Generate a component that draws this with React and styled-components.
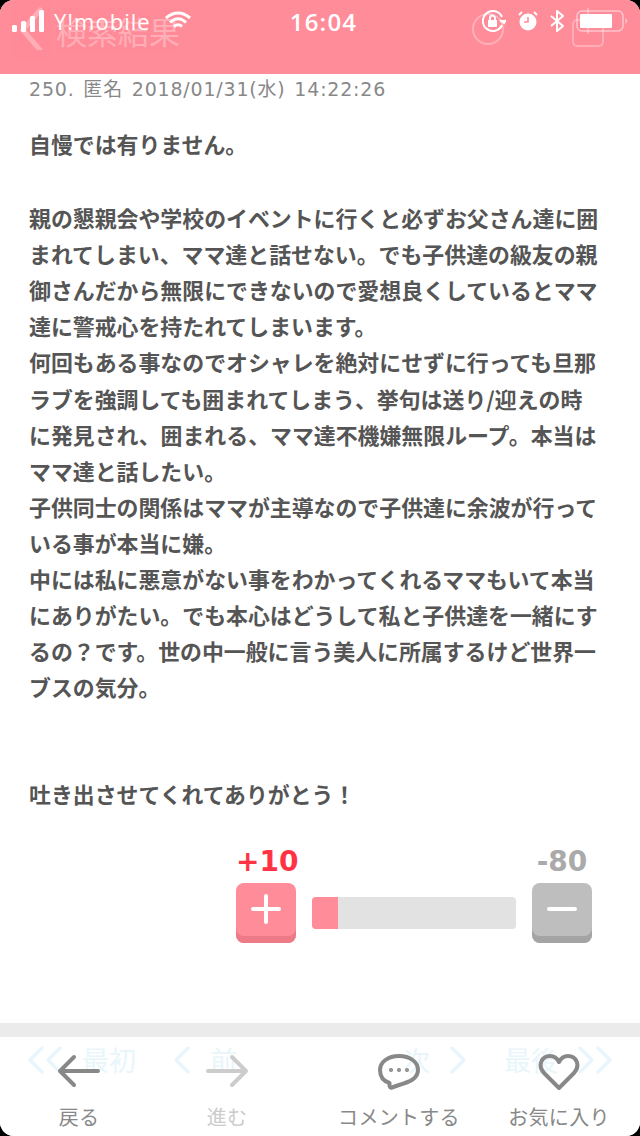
import React from 'react';
import styled, { createGlobalStyle } from 'styled-components';

const GlobalStyle = createGlobalStyle`
  html, body {
    margin: 0;
    padding: 0;
    background: #000;
  }
`;

const FONT = `"Noto Sans CJK JP", "Noto Sans", sans-serif`;

const Screen = styled.div`
  width: 640px;
  height: 1136px;
  background: #fff;
  border-radius: 14px;
  overflow: hidden;
  display: flex;
  flex-direction: column;
  font-family: ${FONT};
  position: relative;
`;

const Header = styled.header`
  height: 74px;
  flex: none;
  background: #ff8c99;
  position: relative;
  color: #fff;
`;

const StatusBar = styled.div`
  position: absolute;
  left: 12px;
  right: 10px;
  top: 9px;
  height: 24px;
  display: flex;
  align-items: center;
  font-family: "Open Sans", sans-serif;
  font-size: 22px;
`;

const Carrier = styled.div`
  display: flex;
  align-items: center;
  gap: 9px;
  flex: 1;
  letter-spacing: 1px;
`;

const CarrierName = styled.span`
  margin-right: 5px;
`;

const Clock = styled.div`
  font-size: 24px;
  font-weight: 600;
  letter-spacing: 1.2px;
  padding-left: 5px;
`;

const StatusIcons = styled.div`
  display: flex;
  align-items: center;
  justify-content: flex-end;
  gap: 12px;
  flex: 1;
`;

const Faded = styled.div`
  position: absolute;
  opacity: 0.3;
`;

const FadedTitle = styled(Faded)`
  left: 56px;
  top: 10px;
  font-size: 31px;
  line-height: 42px;
`;

const Main = styled.main`
  flex: 1;
  padding: 0 29px;
`;

const Meta = styled.div`
  font-family: "DejaVu Sans", ${FONT};
  font-size: 19px;
  line-height: 28px;
  color: #888;
  letter-spacing: 0.8px;
  word-spacing: 2px;
  white-space: nowrap;
  padding-top: 1px;
`;

const Body = styled.div`
  margin-top: 23px;
  font-size: 21.9px;
  font-weight: 700;
  line-height: 36.1px;
  color: #555;
  width: 582px;
`;

const Line = styled.div`
  min-height: ${(p) => p.$height || 36.1}px;
  white-space: nowrap;
`;

const VoteArea = styled.div`
  margin-top: 33px;
  margin-right: 19px;
  display: grid;
  grid-template-columns: 60px 204px 60px;
  column-gap: 16px;
  justify-content: end;
`;

const Score = styled.div`
  font-family: "DejaVu Sans", sans-serif;
  font-weight: 700;
  font-size: 28px;
  line-height: 32px;
  text-align: center;
  white-space: nowrap;
  color: ${(p) => p.$color};
  margin-bottom: 5px;
`;

const VoteButton = styled.div`
  width: 60px;
  height: 60px;
  border-radius: 8px;
  background: ${(p) => p.$color};
  box-shadow: inset 0 -7px 0 ${(p) => p.$shade};
  display: flex;
  align-items: center;
  justify-content: center;
  padding-bottom: 7px;
  box-sizing: border-box;
`;

const BarColumn = styled.div`
  padding-top: 51px;
`;

const Bar = styled.div`
  height: 32px;
  background: #e2e2e2;
  border-radius: 4px;
  overflow: hidden;
`;

const BarFill = styled.div`
  height: 100%;
  background: #ff8c99;
`;

const Footer = styled.footer`
  flex: none;
  height: 113px;
  position: relative;
  background: #fff;
`;

const FooterStripe = styled.div`
  height: 14px;
  background: #ebebeb;
`;

const Pager = styled.div`
  position: absolute;
  top: 18px;
  left: 28px;
  right: 28px;
  display: flex;
  align-items: center;
  justify-content: space-between;
  color: #e8f6fb;
  font-size: 27px;
  line-height: 38px;
`;

const PagerGroup = styled.div`
  display: flex;
  align-items: center;
  gap: 38px;
`;

const PagerItem = styled.div`
  display: flex;
  align-items: center;
  gap: 20px;
`;

const TabBar = styled.nav`
  position: absolute;
  inset: 14px 0 0 0;
  display: grid;
  grid-template-columns: 158px 138px 206px 114px;
`;

const Tab = styled.div`
  display: flex;
  flex-direction: column;
  align-items: center;
  padding-top: 17px;
  color: ${(p) => (p.$disabled ? '#ccc' : '#888')};
`;

const TabIcon = styled.svg`
  width: 44px;
  height: 38px;
  fill: none;
  stroke: currentColor;
  stroke-width: 4;
  stroke-linecap: round;
  stroke-linejoin: round;
`;

const TabLabel = styled.div`
  margin-top: 11px;
  font-size: 20px;
  line-height: 28px;
  letter-spacing: 0.3px;
  white-space: nowrap;
`;

// the blank rows are not all the same height in the reference
const lines = [
  ['自慢では有りません。'],
  ['', 38],
  ['親の懇親会や学校のイベントに行くと必ずお父さん達に囲'],
  ['まれてしまい、ママ達と話せない。でも子供達の級友の親'],
  ['御さんだから無限にできないので愛想良くしているとママ'],
  ['達に警戒心を持たれてしまいます。'],
  ['何回もある事なのでオシャレを絶対にせずに行っても旦那'],
  ['ラブを強調しても囲まれてしまう、挙句は送り/迎えの時'],
  ['に発見され、囲まれる、ママ達不機嫌無限ループ。本当は'],
  ['ママ達と話したい。'],
  ['子供同士の関係はママが主導なので子供達に余波が行って'],
  ['いる事が本当に嫌。'],
  ['中には私に悪意がない事をわかってくれるママもいて本当'],
  ['にありがたい。でも本心はどうして私と子供達を一緒にす'],
  ['るの？です。世の中一般に言う美人に所属するけど世界一'],
  ['ブスの気分。'],
  ['', 35.5],
  ['', 35.5],
  ['吐き出させてくれてありがとう！'],
];

const Chevrons = ({ dir, count }) => {
  const width = count === 2 ? 34 : 16;
  return (
    <svg width={width} height="28" viewBox={`0 0 ${width} 28`} fill="none" stroke="currentColor" strokeWidth="3.5" strokeLinecap="round" strokeLinejoin="round">
      {Array.from({ length: count }).map((_, i) => {
        const x = i * 18;
        return (
          <path
            key={i}
            d={dir === 'left' ? `M${x + 14} 2 L${x + 2} 14 L${x + 14} 26` : `M${x + 2} 2 L${x + 14} 14 L${x + 2} 26`}
          />
        );
      })}
    </svg>
  );
};

export default function App() {
  return (
    <>
      <GlobalStyle />
      <Screen>
        <Header>
          <FadedTitle>検索結果</FadedTitle>
          <Faded style={{ left: 18, top: 6 }}>
            <svg width="26" height="44" viewBox="0 0 26 44" fill="none" stroke="#fff" strokeWidth="5" strokeLinecap="round"><path d="M22 4 L5 24 L22 44" /></svg>
          </Faded>
          <Faded style={{ left: 471, top: 12 }}>
            <svg width="34" height="34" viewBox="0 0 34 34" fill="none" stroke="#fff" strokeWidth="2"><circle cx="17" cy="17" r="15" /></svg>
          </Faded>
          <Faded style={{ left: 571, top: 6 }}>
            <svg width="36" height="42" viewBox="0 0 36 42" fill="none" stroke="#fff" strokeWidth="2"><rect x="2" y="14" width="30" height="26" rx="4" /><path d="M17 2 V28" /></svg>
          </Faded>
          <StatusBar>
            <Carrier>
              <svg width="33" height="22" viewBox="0 0 33 22" fill="#fff">
                <rect x="0" y="15" width="5" height="7" rx="1.5" />
                <rect x="9" y="11" width="5" height="11" rx="1.5" />
                <rect x="18" y="6" width="5" height="16" rx="1.5" />
                <rect x="27" y="0" width="5" height="22" rx="1.5" />
              </svg>
              <CarrierName>Y!mobile</CarrierName>
              <svg width="26" height="20" viewBox="0 0 26 20" fill="none" stroke="#fff" strokeWidth="3"><path d="M1 7 Q13 -3 25 7" /><path d="M5 11.5 Q13 4 21 11.5" /><path d="M9 15.5 Q13 12 17 15.5" /></svg>
            </Carrier>
            <Clock>16:04</Clock>
            <StatusIcons>
              <svg width="24" height="22" viewBox="0 0 24 22" fill="none" stroke="#fff" strokeWidth="2"><path d="M20 15 A10 10 0 1 1 20 7" /><path d="M18 10 L22 13 L24 10" fill="#fff" /><rect x="6" y="10" width="9" height="7" fill="#fff" stroke="none" /><path d="M8 10 V8 a2.5 2.5 0 0 1 5 0 V10" /></svg>
              <svg width="20" height="20" viewBox="0 0 20 20"><circle cx="10" cy="11" r="8.5" fill="#fff" /><path d="M10 6 V11 H6" stroke="#ff8c99" strokeWidth="1.6" fill="none" /><path d="M1 4 L4 1 M19 4 L16 1" stroke="#fff" strokeWidth="2" /></svg>
              <svg width="14" height="22" viewBox="0 0 14 22" fill="none" stroke="#fff" strokeWidth="2"><path d="M1 6 L13 16 L7 21 V1 L13 6 L1 16" /></svg>
              <svg width="54" height="22" viewBox="0 0 54 22"><rect x="1" y="1" width="46" height="20" rx="5" fill="none" stroke="#fff" strokeOpacity="0.5" strokeWidth="1.5" /><rect x="4" y="4" width="32" height="14" rx="1" fill="#fff" /><path d="M49.5 8 Q53 11 49.5 14 Z" fill="#fff" fillOpacity="0.5" /></svg>
            </StatusIcons>
          </StatusBar>
        </Header>
        <Main>
          <Meta>250. 匿名 2018/01/31(水) 14:22:26</Meta>
          <Body>
            {lines.map(([text, height], i) => (
              <Line key={i} $height={height}>{text}</Line>
            ))}
          </Body>
          <VoteArea>
            <div>
              <Score $color="#ff3344">+10</Score>
              <VoteButton $color="#ff8c99" $shade="#ec7a87">
                <svg width="30" height="30" viewBox="0 0 30 30" stroke="#fff" strokeWidth="4" strokeLinecap="round"><path d="M15 2 V28 M2 15 H28" /></svg>
              </VoteButton>
            </div>
            <BarColumn>
              <Bar><BarFill style={{ width: `${(10 / 80) * 100 + 0.25}%` }} /></Bar>
            </BarColumn>
            <div>
              <Score $color="#aaa">-80</Score>
              <VoteButton $color="#bebebe" $shade="#a4a4a4">
                <svg width="30" height="30" viewBox="0 0 30 30" stroke="#fff" strokeWidth="4" strokeLinecap="round"><path d="M2 15 H28" /></svg>
              </VoteButton>
            </div>
          </VoteArea>
        </Main>
        <Footer>
          <FooterStripe />
          <Pager>
            <PagerGroup>
              <PagerItem>
                <Chevrons dir="left" count={2} />
                <span>最初</span>
              </PagerItem>
              <PagerItem>
                <Chevrons dir="left" count={1} />
                <span>前</span>
              </PagerItem>
            </PagerGroup>
            <PagerGroup>
              <PagerItem>
                <span>次</span>
                <Chevrons dir="right" count={1} />
              </PagerItem>
              <PagerItem>
                <span>最後</span>
                <Chevrons dir="right" count={2} />
              </PagerItem>
            </PagerGroup>
          </Pager>
          <TabBar>
            <Tab>
              <TabIcon viewBox="0 0 44 38"><path d="M41 17 H3 M17 3 L3 17 L17 31" /></TabIcon>
              <TabLabel>戻る</TabLabel>
            </Tab>
            <Tab $disabled>
              <TabIcon viewBox="0 0 44 38"><path d="M3 17 H41 M27 3 L41 17 L27 31" /></TabIcon>
              <TabLabel>進む</TabLabel>
            </Tab>
            <Tab>
              <TabIcon viewBox="0 0 44 38">
                <path d="M22 2 C33 2 41 8 41 16 C41 25 32 28 22 31 L15 33.5 C13.5 34 12.5 33 12.5 31.5 L12.5 29 C6 27 3 22 3 16 C3 8 11 2 22 2 Z" />
                <circle cx="14" cy="16" r="0.8" strokeWidth="2.5" /><circle cx="22" cy="16" r="0.8" strokeWidth="2.5" /><circle cx="30" cy="16" r="0.8" strokeWidth="2.5" />
              </TabIcon>
              <TabLabel>コメントする</TabLabel>
            </Tab>
            <Tab>
              <TabIcon viewBox="0 0 44 38">
                <path d="M22 34 L7 19 C0 11 5 2 13 2 C17 2 20 4 22 8 C24 4 27 2 31 2 C39 2 44 11 37 19 Z" />
              </TabIcon>
              <TabLabel>お気に入り</TabLabel>
            </Tab>
          </TabBar>
        </Footer>
      </Screen>
    </>
  );
}
